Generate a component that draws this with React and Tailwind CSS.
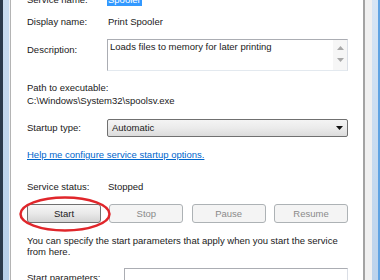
import React from "react";

const font = { fontFamily: '"Liberation Sans", Arial, sans-serif' };

const Label = ({ children }) => (
  <div className="w-[80px] shrink-0">{children}</div>
);

const Button = ({ children, disabled }) => (
  <div
    className={
      disabled
        ? "w-[74px] h-[19px] flex items-center justify-center rounded-[3px] border border-[#adb2b5] bg-[#f4f4f4] text-[#8a8a8a]"
        : "w-[74px] h-[19px] flex items-center justify-center rounded-[3px] border border-[#707070] bg-gradient-to-b from-[#f6f6f6] via-[#e9e9e9] to-[#d4d4d4] text-[#1a1a1a]"
    }
  >
    {children}
  </div>
);

export default function App() {
  return (
    <div
      className="w-[380px] h-[280px] overflow-hidden flex bg-white text-[9.5px] leading-[12px] text-[#1a1a1a]"
      style={font}
    >
      {/* left window frame */}
      <div className="w-[3px] shrink-0 bg-[#2b3a4c]" />
      <div className="w-[6px] shrink-0 bg-gradient-to-b from-[#c9dcf0] to-[#b7cfe9]" />
      <div className="w-[1px] shrink-0 bg-[#eef2f7]" />
      <div className="w-[1px] shrink-0 bg-[#b4b4b4]" />

      {/* page */}
      <div className="w-[352px] shrink-0 pl-[16px] pr-[15px] flex flex-col -mt-[6px]">
        <div className="h-[12px] flex items-center">
          <Label>Service name:</Label>
          <span className="bg-[#3399ff] text-white px-[1px] h-[12px]">Spooler</span>
        </div>

        <div className="mt-[10px] h-[12px] flex items-center">
          <Label>Display name:</Label>
          <span className="pl-[1px]">Print Spooler</span>
        </div>

        <div className="mt-[11px] flex">
          <div className="w-[80px] shrink-0 pt-[5px]">Description:</div>
          <div className="flex-1 h-[32px] flex border border-[#abadb3] border-r-[#dbdfe6] border-b-[#e3e9ef]">
            <div className="flex-1 pl-[2px] pt-[1px]">Loads files to memory for later printing</div>
            <div className="w-[14px] bg-[#f6f6f6] flex flex-col items-center pt-[6px] gap-[8px]">
              <svg width="7" height="4" viewBox="0 0 7 4">
                <path d="M0 4 L3.5 0 L7 4 Z" fill="#a8a8a8" />
              </svg>
              <svg width="7" height="4" viewBox="0 0 7 4">
                <path d="M0 0 L3.5 4 L7 0 Z" fill="#a8a8a8" />
              </svg>
            </div>
          </div>
        </div>

        <div className="mt-[11px] h-[12px]">Path to executable:</div>
        <div className="mt-[1px] h-[12px]">C:\Windows\System32\spoolsv.exe</div>

        <div className="mt-[12px] flex items-center">
          <Label>Startup type:</Label>
          <div className="flex-1 h-[18px] flex items-center justify-between pl-[4px] pr-[4px] rounded-[2px] border border-[#707070] bg-gradient-to-b from-[#f4f4f4] via-[#ebebeb] to-[#dcdcdc]">
            <span>Automatic</span>
            <svg width="7" height="4" viewBox="0 0 7 4">
              <path d="M0 0 L3.5 4 L7 0 Z" fill="#111" />
            </svg>
          </div>
        </div>

        <div className="mt-[12px] h-[12px]">
          <span className="text-[#0066cc] underline">
            Help me configure service startup options.
          </span>
        </div>

        <div className="mt-[11px] h-[1px] bg-[#c4c4c4] mr-[2px]" />

        <div className="mt-[9px] h-[12px] flex items-center">
          <Label>Service status:</Label>
          <span className="pl-[1px]">Stopped</span>
        </div>

        <div className="mt-[11px] flex justify-between">
          <div className="relative">
            <Button>Start</Button>
            <svg
              className="absolute left-[-8px] top-[-8px]"
              width="93"
              height="37"
              viewBox="0 0 93 37"
            >
              <ellipse cx="46" cy="18" rx="44.5" ry="16.5" fill="none" stroke="#e0262b" strokeWidth="2.5" />
            </svg>
          </div>
          <Button disabled>Stop</Button>
          <Button disabled>Pause</Button>
          <Button disabled>Resume</Button>
        </div>

        <div className="mt-[12px] leading-[11px]">
          You can specify the start parameters that apply when you start the service
          <br />
          from here.
        </div>

        <div className="mt-[11px] flex">
          <div className="w-[97px] shrink-0 pt-[4px]">Start parameters:</div>
          <div className="flex-1 h-[20px] border border-[#abadb3] border-r-[#dbdfe6] border-b-[#e3e9ef]" />
        </div>
      </div>

      {/* right frame */}
      <div className="w-[2px] shrink-0 bg-[#a3a3a3]" />
      <div className="w-[7px] shrink-0 bg-[#f0f0f0]" />
      <div className="w-[6px] shrink-0 bg-gradient-to-b from-[#d6e5f5] to-[#bcd3ec]" />
      <div className="w-[2px] shrink-0 bg-[#5fa3e3]" />
    </div>
  );
}
